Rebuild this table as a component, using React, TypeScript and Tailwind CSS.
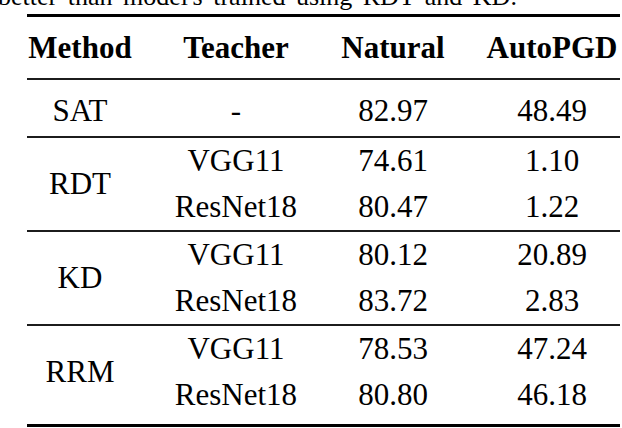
const cols = "grid grid-cols-[106px_128px_108px_132px] gap-x-[39px]";

type Row = { teacher: string; natural: string; pgd: string };
type Group = { method: string; rows: Row[] };

const groups: Group[] = [
  {
    method: "RDT",
    rows: [
      { teacher: "VGG11", natural: "74.61", pgd: "1.10" },
      { teacher: "ResNet18", natural: "80.47", pgd: "1.22" },
    ],
  },
  {
    method: "KD",
    rows: [
      { teacher: "VGG11", natural: "80.12", pgd: "20.89" },
      { teacher: "ResNet18", natural: "83.72", pgd: "2.83" },
    ],
  },
  {
    method: "RRM",
    rows: [
      { teacher: "VGG11", natural: "78.53", pgd: "47.24" },
      { teacher: "ResNet18", natural: "80.80", pgd: "46.18" },
    ],
  },
];

const Cell = ({ children, className = "" }: { children: React.ReactNode; className?: string }) => (
  <div className={`flex h-[46px] items-center justify-center whitespace-nowrap leading-[46px] ${className}`}>
    {children}
  </div>
);

const MidRule = () => <div className="h-[2px] bg-[#1c1c1c]" />;

export default function App() {
  return (
    <div className="h-[428px] w-[622px] overflow-hidden bg-white font-['Liberation_Serif',serif] text-black">
      {/* caption, cut off by the top of the page */}
      <p className="-mt-[16px] mb-[4px] -ml-[2px] h-[26px] whitespace-nowrap text-[26px] leading-[26px] [word-spacing:4px]">
        better than model's trained using RDT and KD.
      </p>

      <div className="ml-[27px] w-[593px] text-[31px]">
        <div className="h-[3px] bg-black" />

        {/* header */}
        <div className={`${cols} pt-[8px] pb-[7px] font-bold`}>
          <Cell>Method</Cell>
          <Cell>Teacher</Cell>
          <Cell>Natural</Cell>
          <Cell>AutoPGD</Cell>
        </div>
        <MidRule />

        {/* SAT */}
        <div className={`${cols} pt-[8px] pb-[2px]`}>
          <Cell>SAT</Cell>
          <Cell>-</Cell>
          <Cell>82.97</Cell>
          <Cell>48.49</Cell>
        </div>

        {groups.map((g, gi) => (
          <div key={g.method}>
            <MidRule />
            <div className={`${cols} ${gi === groups.length - 1 ? "pb-[6px]" : ""}`}>
              <div className="row-span-2 flex items-center justify-center">{g.method}</div>
              {g.rows.map((r) => (
                <div key={r.teacher} className="contents">
                  <Cell>{r.teacher}</Cell>
                  <Cell>{r.natural}</Cell>
                  <Cell>{r.pgd}</Cell>
                </div>
              ))}
            </div>
          </div>
        ))}

        <div className="h-[3px] bg-black" />
      </div>
    </div>
  );
}
